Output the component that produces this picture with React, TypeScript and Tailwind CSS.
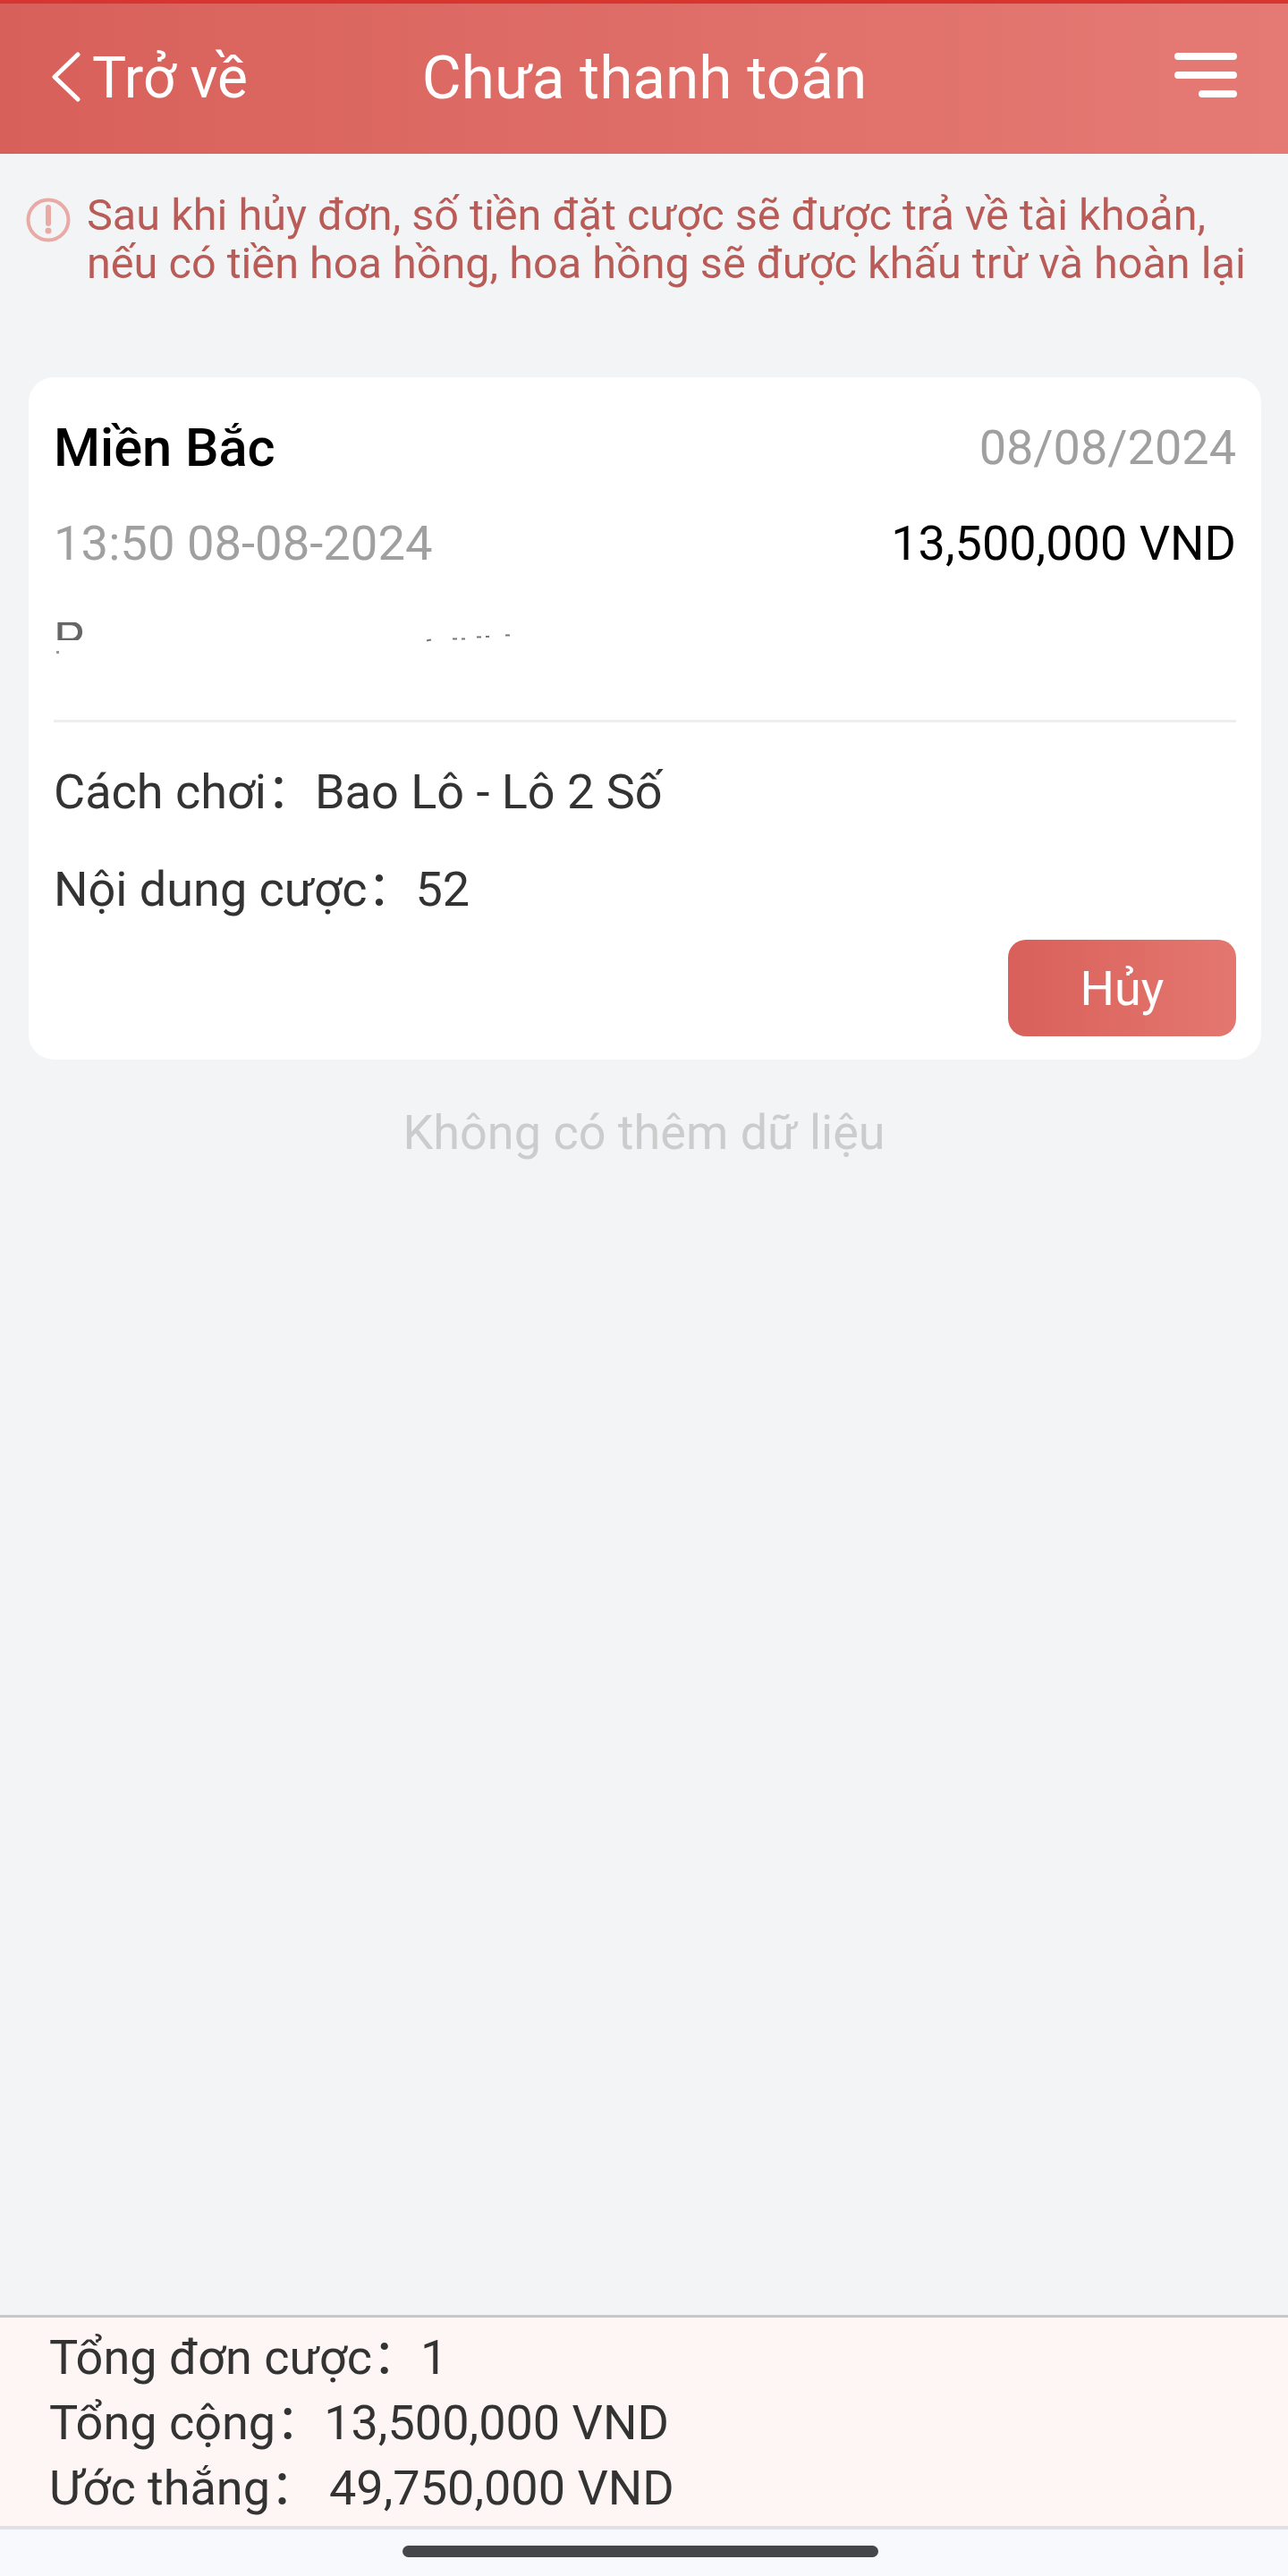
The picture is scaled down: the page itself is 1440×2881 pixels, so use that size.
function Notice() {
  return (
    <div className="flex pt-[42px] pl-[29px] pr-[20px]">
      <svg className="mt-[7px] h-[50px] w-[50px] shrink-0" viewBox="0 0 50 50" fill="none">
        <circle cx="25" cy="25" r="22.5" stroke="#e9aaa6" strokeWidth="4" />
        <path d="M25 11v18" stroke="#e9aaa6" strokeWidth="6" strokeLinecap="round" />
        <circle cx="25" cy="37" r="3.5" fill="#e9aaa6" />
      </svg>
      <p className="ml-[18px] text-[48.6px] leading-[54px] whitespace-nowrap text-[#b95c58]">
        Sau khi hủy đơn, số tiền đặt cược sẽ được trả về tài khoản,
        <br />
        nếu có tiền hoa hồng, hoa hồng sẽ được khấu trừ và hoàn lại
      </p>
    </div>
  );
}

function OrderCard() {
  return (
    <div className="mt-[100px] mr-[30px] ml-[32px] h-[763px] rounded-[28px] bg-white pt-[48px] pr-[28px] pl-[28px]">
      <div className="flex h-[62px] items-center justify-between">
        <span className="text-[59.5px] leading-[62px] font-medium text-black">Miền Bắc</span>
        <span className="text-[54px] leading-[62px] text-[#a0a0a0]">08/08/2024</span>
      </div>
      <div className="mt-[45px] flex h-[62px] items-center justify-between">
        <span className="text-[54.4px] leading-[62px] text-[#a0a0a0]">13:50 08-08-2024</span>
        <span className="text-[54px] leading-[62px] text-black">13,500,000 VND</span>
      </div>
      <div className="mt-[54px] flex h-[32px] items-start">
        <div className="mt-[3px]">
          <div className="h-[20px] overflow-hidden text-[54px] leading-[60px] text-[#666666]">
            <span className="block -translate-y-[11px]">P</span>
          </div>
          <div className="mt-[12px] ml-[3px] h-[3px] w-[3px] bg-[#999999]" />
        </div>
        <svg className="mt-[12px] ml-[378px] h-[16px] w-[100px]" viewBox="0 0 100 16" fill="none">
          <path d="M5 11.5l5-1M34 9.5h5M44 9.5h4M61 7.5h5M71 7h4M93 5.5h5" stroke="#777777" strokeWidth="2" />
        </svg>
      </div>
      <div className="mt-[80px] h-[3px] bg-[#eeeeee]" />
      <div className="mt-[47px] text-[54px] leading-[62px] text-[#333333]">Cách chơi：Bao Lô - Lô 2 Số</div>
      <div className="mt-[47px] text-[54px] leading-[62px] text-[#333333]">Nội dung cược：52</div>
      <div className="mt-[25px] flex justify-end">
        <button className="h-[108px] w-[255px] rounded-[20px] bg-gradient-to-r from-[#d9605a] to-[#e3776f] text-[54px] text-white">
          Hủy
        </button>
      </div>
    </div>
  );
}

export default function App() {
  return (
    <div className="flex h-[2881px] w-[1440px] flex-col overflow-hidden bg-[#f3f4f6] font-['Roboto','Noto_Sans_CJK_SC',sans-serif]">
      <div className="h-[4px] bg-[#d8352f]" />
      <header className="flex h-[168px] items-center justify-between bg-gradient-to-r from-[#d8605a] to-[#e57a74] pr-[57px] pl-[56px] text-white">
        <div className="flex w-[300px] items-center">
          <svg className="mb-[4px] h-[58px] w-[34px]" viewBox="0 0 34 58" fill="none">
            <path d="M31 4L5 29l26 25" stroke="white" strokeWidth="5" strokeLinecap="round" strokeLinejoin="round" />
          </svg>
          <span className="ml-[13px] text-[64px] leading-[70px]">Trở về</span>
        </div>
        <h1 className="mb-[2px] ml-[2px] text-[67.5px] leading-[74px] font-normal">Chưa thanh toán</h1>
        <div className="flex w-[300px] justify-end">
          <svg className="mb-[8px] h-[50px] w-[70px]" viewBox="0 0 70 50" fill="none">
            <path d="M4 4h62M4 25h62M31 46h35" stroke="white" strokeWidth="8" strokeLinecap="round" />
          </svg>
        </div>
      </header>

      <main className="flex-1">
        <Notice />
        <OrderCard />
        <p className="mt-[51px] text-center text-[54px] leading-[62px] text-[#cccccc]">Không có thêm dữ liệu</p>
      </main>

      <footer className="h-[240px] border-t-[3px] border-b-[4px] border-t-[#c8c8c8] border-b-[#e0e1e8] bg-[#fef6f4] pt-[8px] pl-[55px] text-[54px] leading-[73px] text-[#333333]">
        <div>Tổng đơn cược：1</div>
        <div>Tổng cộng：13,500,000 VND</div>
        <div>Ước thắng：<span className="ml-[12px]">49,750,000 VND</span></div>
      </footer>
      <div className="flex h-[52px] justify-center bg-[#f8f9fd] pt-[18px] pr-[8px]">
        <div className="h-[13px] w-[532px] rounded-full bg-[#444649]" />
      </div>
    </div>
  );
}
